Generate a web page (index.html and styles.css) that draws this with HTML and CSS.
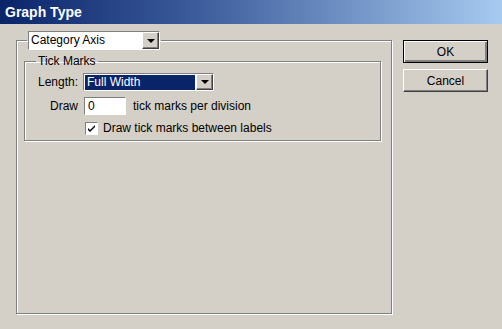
FILE: index.html
```html
<!DOCTYPE html>
<html lang="en">
<head>
  <meta charset="UTF-8">
  <title>Graph Type</title>
  <link rel="stylesheet" href="styles.css">
</head>
<body>

  <div class="window">
    <div class="titlebar">Graph Type</div>

    <div class="content">
      <fieldset class="group outer">
        <legend class="outer-legend">
          <div class="select plain">
            <span class="select-text">Category Axis</span>
            <span class="arrow-btn"><span class="arrow"></span></span>
          </div>
        </legend>

        <fieldset class="group inner">
          <legend class="inner-legend">Tick Marks</legend>

          <div class="form">
            <label class="label">Length:</label>
            <div class="select wide">
              <span class="select-text selected">Full Width</span>
              <span class="arrow-btn"><span class="arrow"></span></span>
            </div>

            <label class="label">Draw</label>
            <div class="row">
              <span class="field">0</span>
              <span>tick marks per division</span>
            </div>

            <span></span>
            <div class="row check-row">
              <span class="checkbox">
                <svg width="9" height="9" viewBox="0 0 9 9"><path d="M1 4 L3 6 L8 1 L8 3 L3 8 L1 6 Z" fill="#000"/></svg>
              </span>
              <span>Draw tick marks between labels</span>
            </div>
          </div>
        </fieldset>
      </fieldset>

      <div class="buttons">
        <button class="btn default">OK</button>
        <button class="btn">Cancel</button>
      </div>
    </div>
  </div>

</body>
</html>
```

FILE: styles.css
```css
body {
  margin: 0;
  font-family: "Liberation Sans", Arial, sans-serif;
  font-size: 12px;
  color: #000;
  background-color: #d4d0c8;
}

.window {
  width: 502px;
  height: 329px;
  background-color: #d4d0c8;
  box-sizing: border-box;
  overflow: hidden;
}

.titlebar {
  height: 24px;
  line-height: 24px;
  padding-left: 5px;
  font-size: 14px;
  font-weight: bold;
  color: white;
  background: linear-gradient(to right, #0a246a, #3d5d9c 40%, #a6caf0);
}

.content {
  display: flex;
  align-items: flex-start;
  padding: 7px 0 0 16px;
}

.group {
  margin: 0;
  border: 1px solid #808080;
  box-shadow: 1px 1px 0 #fff, inset 1px 1px 0 #fff;
}

.outer {
  width: 376px;
  height: 283px;
  box-sizing: border-box;
  padding: 0 10px 0 7px;
}

.outer-legend {
  padding: 0 1px;
  margin-left: 3px;
}

.inner {
  margin-top: 4px;
  padding: 0 10px 5px 10px;
}

.inner-legend {
  padding: 0 2px;
  margin-left: 1px;
}

.select {
  display: flex;
  height: 19px;
  box-sizing: border-box;
  border: 1px solid;
  border-color: #808080 #fff #fff #808080;
  background-color: white;
}

.plain {
  width: 132px;
}

.wide {
  width: 131px;
  height: 18px;
}

.select-text {
  flex: 1;
  padding-left: 2px;
  line-height: 17px;
  margin: 0 1px 0 0;
}

.wide .select-text {
  line-height: 15px;
  margin: 1px 1px 0 1px;
  padding-left: 2px;
}

.selected {
  background-color: #0a246a;
  color: white;
}

.arrow-btn {
  width: 17px;
  display: flex;
  align-items: center;
  justify-content: center;
  box-sizing: border-box;
  background-color: #d4d0c8;
  border: 1px solid;
  border-color: #fff #404040 #404040 #fff;
  box-shadow: inset -1px -1px 0 #808080;
}

.arrow {
  width: 0;
  height: 0;
  border-left: 4px solid transparent;
  border-right: 4px solid transparent;
  border-top: 4px solid #000;
}

.form {
  display: grid;
  grid-template-columns: 43px auto;
  column-gap: 5px;
  row-gap: 6px;
  align-items: center;
  margin-top: 5px;
}

.label {
  text-align: right;
}

.row {
  display: flex;
  align-items: center;
  gap: 7px;
}

.field {
  width: 42px;
  height: 18px;
  box-sizing: border-box;
  border: 1px solid;
  border-color: #808080 #fff #fff #808080;
  background-color: white;
  padding-left: 3px;
  line-height: 16px;
  margin-left: 1px;
}

.check-row {
  gap: 5px;
  margin-left: 2px;
}

.checkbox {
  width: 13px;
  height: 13px;
  box-sizing: border-box;
  border: 1px solid;
  border-color: #808080 #fff #fff #808080;
  background-color: white;
  display: flex;
  align-items: center;
  justify-content: center;
}

.buttons {
  display: flex;
  flex-direction: column;
  gap: 6px;
  margin: 9px 0 0 11px;
}

.btn {
  width: 85px;
  height: 23px;
  font-family: "Liberation Sans", Arial, sans-serif;
  font-size: 12px;
  color: #000;
  background-color: #d4d0c8;
  border: 1px solid;
  border-color: #fff #404040 #404040 #fff;
  box-shadow: inset -1px -1px 0 #808080;
  padding: 0;
}

.default {
  border: 1px solid #000;
  box-shadow: inset 1px 1px 0 #fff, inset -2px -2px 0 #808080;
}
```
